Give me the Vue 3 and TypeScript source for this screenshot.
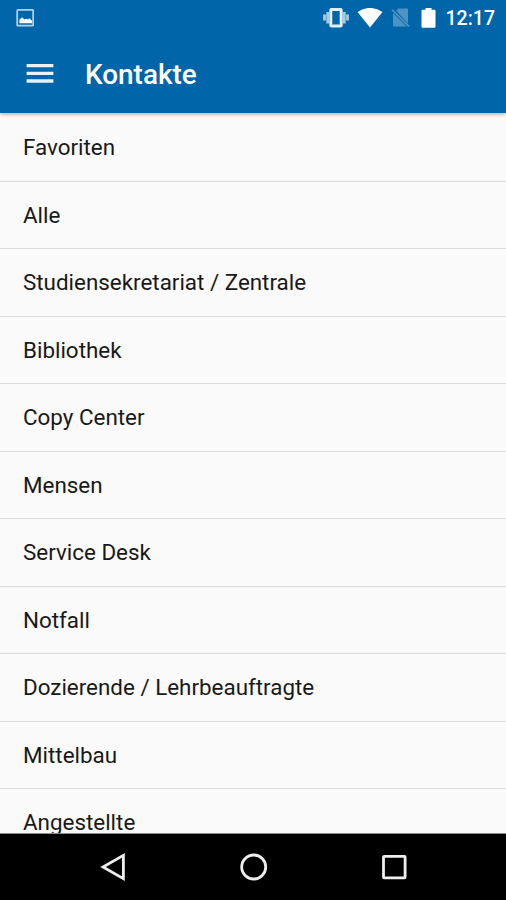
<script setup lang="ts">
const contacts: string[] = [
  'Favoriten',
  'Alle',
  'Studiensekretariat / Zentrale',
  'Bibliothek',
  'Copy Center',
  'Mensen',
  'Service Desk',
  'Notfall',
  'Dozierende / Lehrbeauftragte',
  'Mittelbau',
  'Angestellte',
]
</script>

<template>
  <div class="screen">
    <header class="header">
      <div class="status">
        <svg class="picture" width="18" height="18" viewBox="0 0 18 18">
          <rect x="1.200" y="0.900" width="16" height="15.800" rx="0.800" fill="none" stroke="#b4cfe5" stroke-width="1.800" />
          <path d="M3.400 14.300v-3.600l2.600-2.500 2.400 2.300 1.600-.8 2 .8 1.500-1.200 2.500 2.500v2.500z" fill="#fff" />
        </svg>
        <div class="indicators">
          <svg class="vibrate" width="28" height="20" viewBox="0 0 28 20">
            <path d="M2.500 6.500v6M5.700 4v11.500M22.300 4v11.500M25.500 6.500v6" fill="none" stroke="#a9c9e1" stroke-width="2.800" />
            <rect x="8.800" y="1.400" width="10.400" height="16.700" rx="1" fill="none" stroke="#e2edf6" stroke-width="3" />
          </svg>
          <svg class="wifi" width="26" height="20" viewBox="0 0 26 20">
            <path d="M0.500 4Q13-4.200 25.500 4L13 19.500z" fill="#fff" />
          </svg>
          <svg class="sim" width="20" height="20" viewBox="0 0 20 20">
            <path d="M7 0.600H16q1 0 1 1v14L5.200 2.700zM2 5 15.600 18.500H3q-1 0-1-1z" fill="#4d93c3" />
            <path d="M1 1.700 18 18.500" stroke="#4d93c3" stroke-width="1.800" />
          </svg>
          <svg class="battery" width="15" height="20" viewBox="0 0 15 20">
            <path d="M1.500 1.700H4.500V0h6v1.700h3q1 0 1 1v16q0 1-1 1h-12q-1 0-1-1V2.700q0-1 1-1z" fill="#fff" />
          </svg>
          <span class="time">12:17</span>
        </div>
      </div>
      <div class="toolbar">
        <svg class="menu" width="28" height="20" viewBox="0 0 28 20">
          <path d="M0.600 1.700h26.800M0.600 9.400h26.800M0.600 17h26.800" stroke="#e9f1f8" stroke-width="3.300" />
        </svg>
        <h1 class="title">Kontakte</h1>
      </div>
    </header>
    <main class="content">
      <ul class="list">
        <li v-for="contact in contacts" :key="contact" class="row">{{ contact }}</li>
      </ul>
    </main>
    <nav class="navigation">
      <svg class="nav-icon" width="28" height="28" viewBox="0 0 28 28">
        <path d="M24.400 2.400v23.200L4 14z" />
      </svg>
      <svg class="nav-icon" width="28" height="28" viewBox="0 0 28 28">
        <circle cx="13.700" cy="14" r="12" />
      </svg>
      <svg class="nav-icon" width="28" height="28" viewBox="0 0 28 28">
        <rect x="3.500" y="3.300" width="21.600" height="21.600" rx="0.600" />
      </svg>
    </nav>
  </div>
</template>

<style>
body {
  margin: 0;
}
</style>

<style scoped>
.screen {
  display: flex;
  flex-direction: column;
  height: 900px;
  overflow: hidden;
  background: #fafafa;
  font-family: Roboto, "Liberation Sans", sans-serif;
}

.header {
  position: relative;
  flex: none;
  height: 112.5px;
  background: #0065a9;
  color: #fff;
  box-shadow: 0 1px 4px rgba(0, 0, 0, 0.35);
}

.status {
  display: flex;
  align-items: center;
  justify-content: space-between;
  height: 35px;
  padding: 0 11px 0 16px;
}

.indicators {
  display: flex;
  align-items: center;
}

.wifi {
  margin-left: 7px;
}

.sim {
  margin-left: 8px;
}

.battery {
  margin-left: 10px;
}

.time {
  width: 49.5px;
  margin-left: 9.5px;
  padding-top: 2px;
  font-size: 19.5px;
  font-weight: 500;
  line-height: 33px;
  white-space: nowrap;
}

.toolbar {
  display: flex;
  align-items: center;
  height: 78px;
  padding-left: 26px;
}

.title {
  margin: 2px 0 0 31px;
  font-size: 27.9px;
  font-weight: 500;
  line-height: 36px;
}

.content {
  flex: 1;
  min-height: 0;
  overflow: hidden;
  border-bottom: 1px solid #8b8b8b;
}

.list {
  margin: 0;
  padding: 1.5px 0 0;
  list-style: none;
}

.row {
  box-sizing: border-box;
  height: 67.53px;
  padding-left: 23px;
  border-bottom: 1px solid #dcdcdc;
  color: #191919;
  font-size: 22.4px;
  line-height: 67.4px;
}

.navigation {
  display: flex;
  flex: none;
  align-items: center;
  justify-content: space-between;
  box-sizing: border-box;
  height: 66px;
  padding: 0 98px 1px 99px;
  background: #000;
}

.nav-icon {
  fill: none;
  stroke: #eee;
  stroke-width: 2.8;
}
</style>
